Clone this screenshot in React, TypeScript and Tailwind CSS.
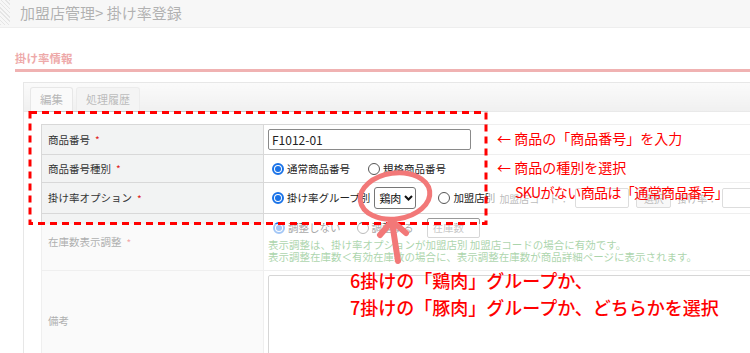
import React from 'react';

// radio drawn by hand so the size matches the capture
function Radio({ on, className = '' }: { on?: boolean; className?: string }) {
  if (on) {
    return (
      <span className={`w-[12px] h-[12px] shrink-0 rounded-full border-[2px] border-[#1a73e8] bg-white flex items-center justify-center ${className}`}>
        <span className="w-[6px] h-[6px] rounded-full bg-[#1a73e8]" />
      </span>
    );
  }
  return <span className={`block w-[12px] h-[12px] shrink-0 rounded-full border border-[#555] bg-white ${className}`} />;
}

function Req() {
  return <span className="ml-[5px] text-[#e02020] text-[10px]">*</span>;
}

function Label({ children }: { children: React.ReactNode }) {
  return (
    <div className="bg-[#f2f3f3] border-r border-[#d8d8d8] pl-[6px] flex items-center text-[10.5px] text-[#333]">
      {children}
    </div>
  );
}

export default function App() {
  return (
    <div className="relative w-[750px] h-[353px] overflow-hidden bg-white font-['Noto_Sans_CJK_JP',sans-serif]">
      {/* --- HEADER --- */}
      <div className="flex h-[28px] bg-[#ececec] border-b border-[#d4d4d4]">
        <div className="w-[10px] h-[25px] bg-[repeating-linear-gradient(45deg,#bdbdbd_0px,#bdbdbd_1px,#ececec_1px,#ececec_3px)]" />
        <div className="pl-[10px] flex items-center text-[15px] leading-none text-[#3c3c3c] pb-[2px]">加盟店管理&gt; 掛け率登録</div>
      </div>

      {/* --- SECTION TITLE --- */}
      <div className="ml-[15px] pt-[22px] pb-[5px] leading-[12px] border-b-[3px] border-[#d94040]">
        <span className="text-[11.5px] font-bold text-[#d42a2a]">掛け率情報</span>
      </div>

      {/* --- PANEL --- */}
      <div className="ml-[23px] mt-[10px] border-l border-t border-[#c4c4c4]">
        <div className="h-[29px] flex items-end gap-[3px] pl-[6px] bg-gradient-to-b from-[#f4f4f4] to-[#dadada] border-b border-[#c8c8c8]">
          <div className="w-[43px] h-[24px] rounded-t-[3px] border border-b-0 border-[#c4c4c4] bg-[#f2f2f2] flex items-center justify-center text-[11.5px] text-[#4a4a4a]">編集</div>
          <div className="w-[64px] h-[24px] rounded-t-[3px] border border-b-0 border-[#d0d0d0] bg-[#e4e4e4] flex items-center justify-center text-[11px] text-[#555]">処理履歴</div>
        </div>

        <div className="pl-[17px] pt-[12px]">
          <div className="w-[760px] border-l border-t border-[#d8d8d8]">
            {/* 商品番号 */}
            <div className="grid grid-cols-[222px_1fr] h-[30px] border-b border-[#d8d8d8]">
              <Label>商品番号<Req /></Label>
              <div className="flex items-center pl-[4px]">
                <input readOnly value="F1012-01" className="w-[203px] h-[21px] border border-[#8a8a8a] rounded-[2px] px-[3px] text-[12px] text-[#222] outline-none" />
              </div>
            </div>

            {/* 商品番号種別 */}
            <div className="grid grid-cols-[222px_1fr] h-[28px] border-b border-[#d8d8d8]">
              <Label>商品番号種別<Req /></Label>
              <div className="flex items-center pl-[8px] text-[10.5px] text-[#222]">
                <Radio on />
                <span className="ml-[3px]">通常商品番号</span>
                <Radio className="ml-[18px]" />
                <span className="ml-[3px]">規格商品番号</span>
              </div>
            </div>

            {/* 掛け率オプション */}
            <div className="grid grid-cols-[222px_1fr] h-[31px] border-b border-[#d8d8d8]">
              <Label>掛け率オプション<Req /></Label>
              <div className="flex items-center pl-[8px] text-[10.5px] text-[#222] whitespace-nowrap">
                <Radio on />
                <span className="ml-[3px]">掛け率グループ別</span>
                <div className="ml-[4px] w-[42px] h-[22px] border border-[#767676] rounded-[3px] flex items-center pl-[4px] gap-[3px] text-[11px] text-[#111]">
                  鶏肉
                  <svg width="9" height="6" viewBox="0 0 9 6">
                    <path d="M1 1l3.5 3.5L8 1" fill="none" stroke="#111" strokeWidth="2" />
                  </svg>
                </div>
                <Radio className="ml-[22px]" />
                <span className="ml-[3px]">加盟店別</span>
                <span className="ml-[4px] text-[10px] text-[#555]">加盟店コード：</span>
                <div className="ml-[6px] w-[54px] h-[20px] shrink-0 border border-[#aaa] rounded-[2px]" />
                <div className="ml-[7px] w-[35px] h-[20px] shrink-0 border border-[#aaa] rounded-[2px] bg-[#eee] flex items-center justify-center text-[10px] text-[#555]">選択</div>
                <span className="ml-[6px] text-[10px] text-[#555]">掛け率：</span>
                <div className="ml-[5px] w-[60px] h-[20px] shrink-0 border border-[#aaa] rounded-[2px]" />
              </div>
            </div>

            {/* 在庫数表示調整 */}
            <div className="grid grid-cols-[222px_1fr] h-[57px] border-b border-[#d8d8d8]">
              <Label>在庫数表示調整<Req /></Label>
              <div className="pl-[9px] pt-[4px] text-[10.5px] whitespace-nowrap">
                <div className="flex items-center h-[20px] text-[#222]">
                  <Radio on />
                  <span className="ml-[3px]">調整しない</span>
                  <Radio className="ml-[16px]" />
                  <span className="ml-[3px]">調整する</span>
                  <div className="ml-[13px] w-[53px] h-[20px] border border-[#999] rounded-[2px] flex items-center pl-[5px] text-[#777]">在庫数</div>
                </div>
                <div className="mt-[1px] -ml-[5px] leading-[12px] text-[#2e962e]">
                  <div>表示調整は、掛け率オプションが加盟店別 加盟店コードの場合に有効です。</div>
                  <div>表示調整在庫数＜有効在庫数の場合に、表示調整在庫数が商品詳細ページに表示されます。</div>
                </div>
              </div>
            </div>

            {/* 備考 */}
            <div className="grid grid-cols-[222px_1fr] h-[100px]">
              <Label>備考</Label>
              <div className="pl-[4px] pt-[4px]">
                <div className="w-[600px] h-[92px] border border-[#999] rounded-[2px]" />
              </div>
            </div>
          </div>
        </div>
      </div>

      {/* --- HIGHLIGHT / MARKUP --- */}
      <svg className="absolute left-0 top-0" width="750" height="353" viewBox="0 0 750 353">
        <path d="M0 0H750V353H0Z M28 111V224H488V111Z" fill="#fff" fillOpacity="0.6" fillRule="evenodd" />
        <rect x="30" y="112.5" width="456" height="111" fill="none" stroke="#ff0000" strokeWidth="3" strokeDasharray="7 5" />
        <ellipse cx="395" cy="196" rx="35" ry="23" transform="rotate(-8 395 196)" fill="none" stroke="#f27878" strokeWidth="5" />
        <path d="M398 261L392 222M380 235L392 221L406 233" fill="none" stroke="#f27878" strokeWidth="6" strokeLinecap="round" strokeLinejoin="round" />
      </svg>

      <div className="absolute left-[497px] top-[130px] text-[14px] leading-[16px] text-[#ff0000] whitespace-nowrap">← 商品の「商品番号」を入力</div>
      <div className="absolute left-[497px] top-[159px] text-[14px] leading-[16px] text-[#ff0000] whitespace-nowrap">← 商品の種別を選択</div>
      <div className="absolute left-[515px] top-[184px] text-[14px] leading-[16px] tracking-[-0.6px] text-[#ff0000] whitespace-nowrap">SKUがない商品は「通常商品番号」</div>
      <div className="absolute left-[350px] top-[270px] text-[18px] leading-[21px] font-medium text-[#ff0000] whitespace-nowrap">6掛けの「鶏肉」グループか、</div>
      <div className="absolute left-[350px] top-[297px] text-[18px] leading-[21px] font-medium text-[#ff0000] whitespace-nowrap">7掛けの「豚肉」グループか、どちらかを選択</div>
    </div>
  );
}
